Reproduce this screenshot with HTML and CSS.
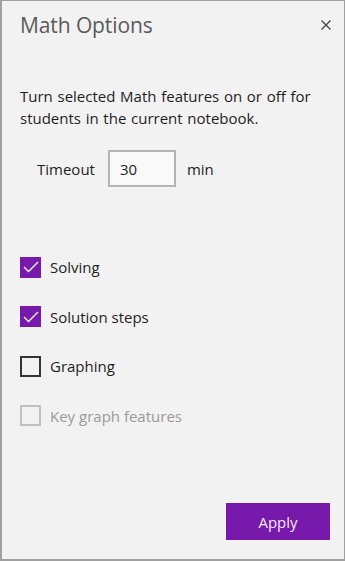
FILE: index.html
```html
<!DOCTYPE html>
<html>
<head>
<meta charset="utf-8">
<link rel="stylesheet" href="styles.css">
</head>
<body>
<div class="panel">
  <div class="header">
    <h1 class="title">Math Options</h1>
    <button class="close" aria-label="Close">
      <svg width="10" height="10" viewBox="0 0 10 10"><path d="M0.5 0.5 L9.5 9.5 M9.5 0.5 L0.5 9.5" stroke="#444" stroke-width="1.3" fill="none"/></svg>
    </button>
  </div>
  <p class="desc">Turn selected Math features on or off for students in the current notebook.</p>
  <div class="timeout">
    <span class="tlabel">Timeout</span>
    <div class="tinput">30</div>
    <span class="tunit">min</span>
  </div>
  <div class="options">
    <div class="opt">
      <span class="box checked"><svg width="16" height="12" viewBox="0 0 16 12"><path d="M1 6 L5.5 10.5 L15 1" stroke="#fff" stroke-width="1.3" fill="none"/></svg></span>
      <span class="olabel">Solving</span>
    </div>
    <div class="opt">
      <span class="box checked"><svg width="16" height="12" viewBox="0 0 16 12"><path d="M1 6 L5.5 10.5 L15 1" stroke="#fff" stroke-width="1.3" fill="none"/></svg></span>
      <span class="olabel">Solution steps</span>
    </div>
    <div class="opt">
      <span class="box"></span>
      <span class="olabel">Graphing</span>
    </div>
    <div class="opt disabled">
      <span class="box"></span>
      <span class="olabel">Key graph features</span>
    </div>
  </div>
  <div class="footer">
    <button class="apply">Apply</button>
  </div>
</div>
</body>
</html>
```
FILE: styles.css
```css
html, body {
  margin: 0;
  padding: 0;
  background: #f2f2f2;
}
.panel {
  box-sizing: border-box;
  width: 345px;
  height: 561px;
  background: #f2f2f2;
  border-top: 1px solid #a0a0a0;
  border-left: 2px solid #a0a0a0;
  border-right: 1px solid #a0a0a0;
  border-bottom: 2px solid #a0a0a0;
  font-family: "Open Sans", "Noto Sans", sans-serif;
  color: #1e1e1e;
  display: flex;
  flex-direction: column;
  padding: 0 13px 0 18px;
}
.header {
  display: flex;
  justify-content: space-between;
  align-items: center;
  height: 48px;
}
.title {
  margin: 0;
  font-weight: 400;
  font-size: 21px;
  color: #5a5a5a;
  letter-spacing: -0.1px;
}
.close {
  border: 0;
  background: none;
  padding: 0;
  width: 10px;
  height: 10px;
  display: flex;
}
.desc {
  margin: 36px 0 0;
  font-size: 15px;
  line-height: 22px;
  word-spacing: 0.8px;
}
.timeout {
  display: flex;
  align-items: center;
  margin-top: 21px;
  padding-left: 17px;
  font-size: 15px;
}
.tinput {
  box-sizing: border-box;
  width: 68px;
  height: 37px;
  margin-left: 13px;
  border: 2px solid #b4b4b4;
  background: #f9f9f9;
  padding-left: 10px;
  display: flex;
  align-items: center;
  font-size: 15px;
}
.tunit {
  margin-left: 11px;
}
.options {
  display: flex;
  flex-direction: column;
  gap: 29.5px;
  margin-top: 70px;
}
.opt {
  display: flex;
  align-items: center;
  height: 20px;
  font-size: 15px;
}
.box {
  box-sizing: border-box;
  width: 21px;
  height: 21px;
  border: 2px solid #333;
  display: flex;
  align-items: center;
  justify-content: center;
}
.box.checked {
  background: #7719aa;
  border-color: #7719aa;
}
.olabel {
  margin-left: 9px;
}
.disabled .box {
  border-color: #c0c0c0;
}
.disabled .olabel {
  color: #9a9a9a;
}
.footer {
  margin-top: auto;
  display: flex;
  justify-content: flex-end;
  padding-bottom: 19px;
}
.apply {
  width: 104px;
  height: 37px;
  border: 0;
  background: #7719aa;
  color: #f4eafa;
  font-family: "Open Sans", "Noto Sans", sans-serif;
  font-size: 15px;
  padding: 0;
  margin-right: 1px;
}
```
